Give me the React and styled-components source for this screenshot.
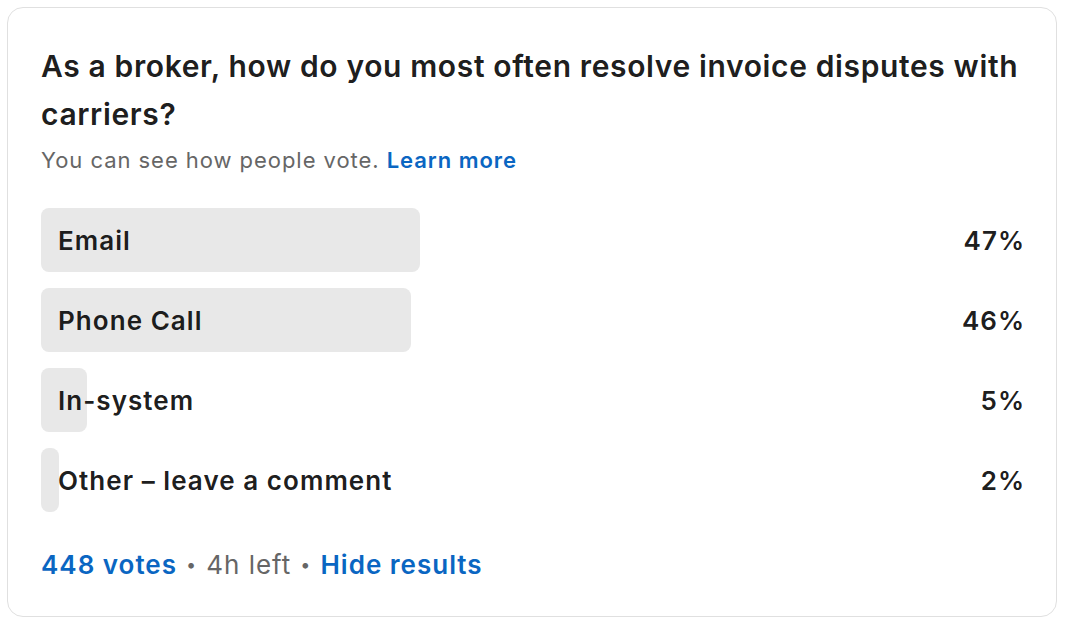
import React from "react";
import styled, { createGlobalStyle } from "styled-components";

const GlobalStyle = createGlobalStyle`
  body {
    margin: 0;
    background: #fff;
    font-family: Inter, "Noto Sans", "Liberation Sans", sans-serif;
    -webkit-font-smoothing: antialiased;
  }
`;

const Page = styled.div`
  padding: 7px;
`;

const Card = styled.div`
  width: 1050px;
  box-sizing: border-box;
  border: 1px solid #e0e0e0;
  border-radius: 16px;
  padding: 34px 31px 35px 33px;
`;

const Question = styled.h2`
  margin: 0;
  font-size: 30px;
  line-height: 48px;
  font-weight: 600;
  letter-spacing: 0.63px;
  color: rgba(0, 0, 0, 0.9);
`;

const Note = styled.p`
  margin: 7px 0 0;
  font-size: 22px;
  line-height: 30px;
  letter-spacing: 0.95px;
  color: #666;

  a {
    color: #0a66c2;
    font-weight: 600;
    text-decoration: none;
  }
`;

const Options = styled.div`
  margin-top: 33px;
  display: flex;
  flex-direction: column;
  gap: 16px;
`;

const Row = styled.div`
  display: flex;
  align-items: center;
  height: 64px;
`;

const Track = styled.div`
  position: relative;
  width: 805px;
  height: 100%;
  display: flex;
  align-items: center;
`;

const Fill = styled.div`
  position: absolute;
  left: 0;
  top: 0;
  bottom: 0;
  background: #e8e8e8;
  border-radius: 8px;
`;

const Label = styled.span`
  position: relative;
  padding-left: 17px;
  font-size: 26px;
  font-weight: 600;
  letter-spacing: 1.05px;
  color: rgba(0, 0, 0, 0.9);
`;

const Percent = styled.span`
  margin-left: auto;
  font-size: 26px;
  font-weight: 600;
  letter-spacing: 1px;
  color: rgba(0, 0, 0, 0.9);
`;

const Footer = styled.div`
  margin-top: 37px;
  display: flex;
  align-items: center;
  font-size: 26px;
  line-height: 32px;
  letter-spacing: 1px;
  color: #666;
`;

const Link = styled.a`
  color: #0a66c2;
  font-weight: 600;
  text-decoration: none;
`;

const Dot = styled.span`
  margin: 0 9px;
  font-size: 18px;
`;

const options = [
  { label: "Email", pct: 47, bar: 379 },
  { label: "Phone Call", pct: 46, bar: 370 },
  { label: "In-system", pct: 5, bar: 46 },
  { label: "Other – leave a comment", pct: 2, bar: 18 }
];

export default function App() {
  return (
    <Page>
      <GlobalStyle />
      <Card>
        <Question>
          As a broker, how do you most often resolve invoice disputes with
          carriers?
        </Question>
        <Note>
          You can see how people vote. <a href="#">Learn more</a>
        </Note>

        <Options>
          {options.map(o => (
            <Row key={o.label}>
              <Track>
                <Fill style={{ width: o.bar }} />
                <Label>{o.label}</Label>
              </Track>
              <Percent>{o.pct}%</Percent>
            </Row>
          ))}
        </Options>

        <Footer>
          <Link href="#">448 votes</Link>
          <Dot>•</Dot>
          <span>4h left</span>
          <Dot>•</Dot>
          <Link href="#">Hide results</Link>
        </Footer>
      </Card>
    </Page>
  );
}
